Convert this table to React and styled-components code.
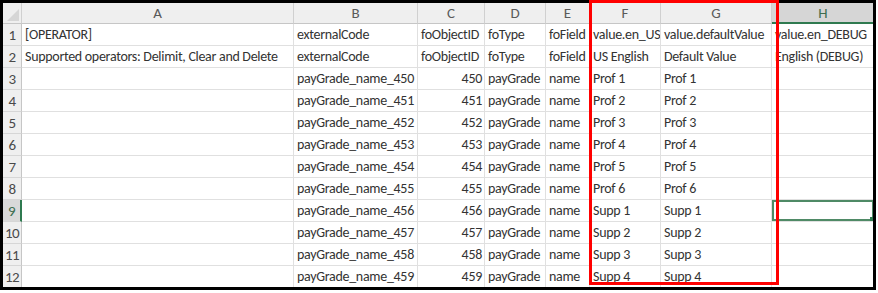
import styled, { createGlobalStyle } from 'styled-components';

const GlobalStyle = createGlobalStyle`
  html, body {
    margin: 0;
    padding: 0;
    background: #ffffff;
  }
`;

const Sheet = styled.div`
  position: relative;
  width: 878px;
  height: 293px;
  background: #ffffff;
  font-family: Calibri, Lato, "Liberation Sans", sans-serif;
`;

const Frame = styled.div`
  width: 876px;
  height: 290px;
  box-sizing: border-box;
  border: 3px solid #000000;
  overflow: hidden;
  display: grid;
  grid-template-columns: 19px 272px 124px 67px 61px 44px 71px 111px 103px;
  grid-template-rows: 21px repeat(12, 22px);
`;

const Corner = styled.div`
  position: relative;
  background: #efefef;
  border-right: 1px solid #d0d0d0;
  border-bottom: 1px solid #c6c6c6;
  box-sizing: border-box;

  &::after {
    content: '';
    position: absolute;
    right: 2px;
    bottom: 2px;
    border-left: 12px solid transparent;
    border-bottom: 12px solid #d6d6d6;
  }
`;

const ColHead = styled.div`
  display: flex;
  align-items: center;
  justify-content: center;
  box-sizing: border-box;
  background: ${(p) => (p.$active ? '#d6d6d6' : '#efefef')};
  border-right: 1px solid #d0d0d0;
  border-bottom: ${(p) => (p.$active ? '2px solid #2f7a50' : '1px solid #c6c6c6')};
  color: ${(p) => (p.$active ? '#3d6e50' : '#5a5a5a')};
  font-size: 15px;
`;

const RowHead = styled.div`
  display: flex;
  align-items: flex-end;
  justify-content: center;
  box-sizing: border-box;
  padding-bottom: 1px;
  background: ${(p) => (p.$active ? '#d9d9d9' : '#efefef')};
  border-right: ${(p) => (p.$active ? '2px solid #2f7a50' : '1px solid #c6c6c6')};
  border-bottom: 1px solid #d6d6d6;
  color: ${(p) => (p.$active ? '#3d6e50' : '#4a4a4a')};
  font-size: 15px;
  letter-spacing: -0.5px;
  line-height: 18px;
`;

const Cell = styled.div`
  position: relative;
  display: flex;
  align-items: flex-end;
  justify-content: ${(p) => (p.$right ? 'flex-end' : 'flex-start')};
  box-sizing: border-box;
  padding: 0 2px 1px 3px;
  border-right: 1px solid #e0e0e0;
  border-bottom: 1px solid #e0e0e0;
  color: #333333;
  font-size: 14px;
  line-height: 18px;
  letter-spacing: -0.3px;
  white-space: nowrap;
  overflow: hidden;
  box-shadow: ${(p) => (p.$selected ? 'inset 0 0 0 2px #4f8a66' : 'none')};

  &::after {
    content: '';
    display: ${(p) => (p.$selected ? 'block' : 'none')};
    position: absolute;
    right: 0;
    bottom: 0;
    width: 4px;
    height: 4px;
    background: #2f7a50;
  }
`;

const Highlight = styled.div`
  position: absolute;
  left: 589px;
  top: 0;
  width: 190px;
  height: 285px;
  box-sizing: border-box;
  border: 3px solid #ff0000;
  pointer-events: none;
`;

const columns = ['A', 'B', 'C', 'D', 'E', 'F', 'G', 'H'];

const labels = ['Prof 1', 'Prof 2', 'Prof 3', 'Prof 4', 'Prof 5', 'Prof 6', 'Supp 1', 'Supp 2', 'Supp 3', 'Supp 4'];

const rows = [
  ['[OPERATOR]', 'externalCode', 'foObjectID', 'foType', 'foField', 'value.en_US', 'value.defaultValue', 'value.en_DEBUG'],
  ['Supported operators: Delimit, Clear and Delete', 'externalCode', 'foObjectID', 'foType', 'foField', 'US English', 'Default Value', 'English (DEBUG)'],
  ...labels.map((label, i) => ['', `payGrade_name_${450 + i}`, 450 + i, 'payGrade', 'name', label, label, '']),
];

const App = () => {
  return (
    <Sheet>
      <GlobalStyle />
      <Frame>
        <Corner />
        {columns.map((c) => (
          <ColHead key={c} $active={c === 'H'}>{c}</ColHead>
        ))}
        {rows.map((row, r) => [
          <RowHead key={`h${r}`} $active={r === 8}>{r + 1}</RowHead>,
          ...row.map((value, c) => (
            <Cell
              key={`${r}-${c}`}
              $right={typeof value === 'number'}
              $selected={r === 8 && c === 7}
            >
              {value}
            </Cell>
          )),
        ])}
      </Frame>
      <Highlight />
    </Sheet>
  );
};

export default App;
